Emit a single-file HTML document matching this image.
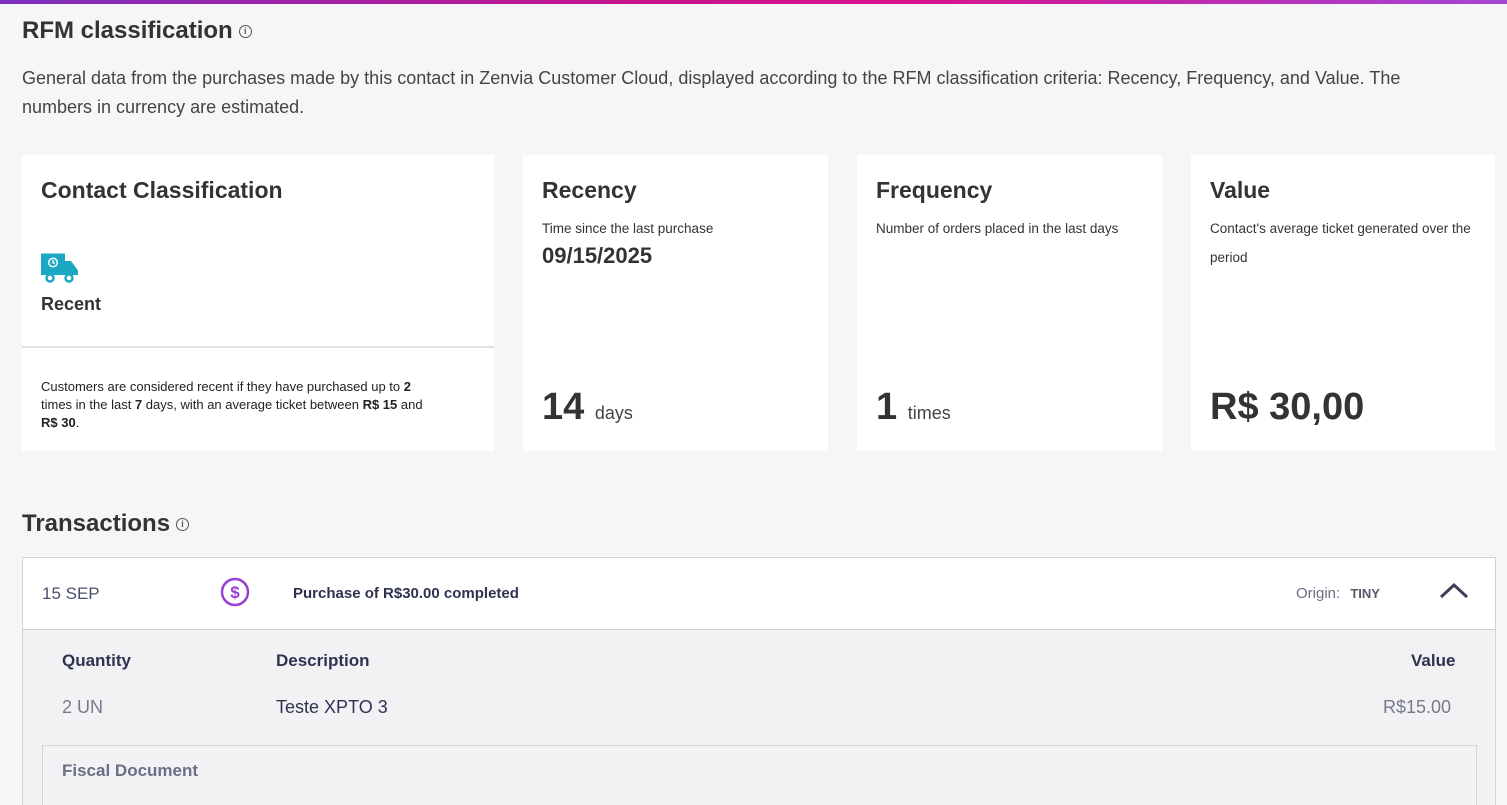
<!DOCTYPE html>
<html style="overflow:hidden;height:805px"><head><style>
*{box-sizing:border-box;margin:0;padding:0}
body{width:1507px;height:805px;overflow:hidden;background:#f6f6f8;font-family:"Liberation Sans",sans-serif;color:#333;position:relative}
.bar{position:absolute;top:0;left:0;width:1507px;height:4px;background:linear-gradient(90deg,#7b2fbe,#c3158f 40%,#d8128a 60%,#a445d6)}
.abs{position:absolute}
h1{position:absolute;left:22px;top:17px;font-size:24px;font-weight:bold;color:#333}
.info{display:inline-block;width:13px;height:13px;border:1.3px solid #555;border-radius:50%;font-size:9px;text-align:center;line-height:11px;vertical-align:middle;margin-left:6px;font-weight:bold;color:#555}
.desc{position:absolute;left:22px;top:64px;width:1445px;font-size:18px;line-height:29px;color:#444}
.card{position:absolute;top:155px;height:296px;background:#fff}
.card h2{position:absolute;left:19px;top:22px;font-size:23px;font-weight:bold;color:#333}
.card .sub{position:absolute;left:19px;top:59px;font-size:13.5px;color:#333;line-height:29px;width:270px}
.big{position:absolute;left:19px;bottom:22px;font-size:38px;font-weight:bold;color:#333}
.big small{font-size:18px;font-weight:normal;color:#444}
</style></head><body>
<div class="bar"></div>
<h1>RFM classification<span class="info">i</span></h1>
<div class="desc">General data from the purchases made by this contact in Zenvia Customer Cloud, displayed according to the RFM classification criteria: Recency, Frequency, and Value. The numbers in currency are estimated.</div>

<div class="card" style="left:22px;width:472px">
<h2>Contact Classification</h2>
<svg class="abs" style="left:19px;top:98px" width="38" height="32" viewBox="0 0 38 32">
<rect x="1.5" y="2" width="21" height="17" fill="none" stroke="#1aa8c4" stroke-width="3"/>
<rect x="3" y="3.5" width="18" height="14" fill="#1aa8c4"/>
<circle cx="12" cy="9.5" r="5" fill="#fff"/><circle cx="12" cy="9.5" r="3.5" fill="#1aa8c4"/>
<path d="M12 7v3h2" stroke="#fff" stroke-width="1.3" fill="none"/>
<path d="M22 8h8l6 8v6H22z" fill="#1aa8c4"/><rect x="0" y="17" width="37" height="5" fill="#1aa8c4"/>
<circle cx="9" cy="25" r="3.5" fill="#fff" stroke="#1aa8c4" stroke-width="2.5"/>
<circle cx="28" cy="25" r="3.5" fill="#fff" stroke="#1aa8c4" stroke-width="2.5"/>
</svg>
<div class="abs" style="left:19px;top:139px;font-size:18px;font-weight:bold;color:#333">Recent</div>
<div class="abs" style="left:0;top:191px;width:472px;height:2px;background:#e2e2e4"></div>
<div class="abs" style="left:19px;top:223px;width:400px;font-size:13px;line-height:18px;color:#222">Customers are considered recent if they have purchased up to <b>2</b> times in the last <b>7</b> days, with an average ticket between <b>R$ 15</b> and <b>R$ 30</b>.</div>
</div>

<div class="card" style="left:523px;width:305px">
<h2>Recency</h2><div class="sub">Time since the last purchase</div>
<div class="abs" style="left:19px;top:88px;font-size:22px;font-weight:bold;color:#333">09/15/2025</div>
<div class="big">14 <small>days</small></div>
</div>
<div class="card" style="left:857px;width:305px">
<h2>Frequency</h2><div class="sub">Number of orders placed in the last days</div>
<div class="big">1 <small>times</small></div>
</div>
<div class="card" style="left:1191px;width:304px">
<h2>Value</h2><div class="sub">Contact's average ticket generated over the period</div>
<div class="big">R$ 30,00</div>
</div>

<h1 style="top:510px">Transactions<span class="info">i</span></h1>
<div class="abs" style="left:22px;top:557px;width:1474px;height:248px;background:#f2f2f5;border:1px solid #d4d4d8;border-bottom:none;overflow:hidden">
<div class="abs" style="left:0;top:0;width:1472px;height:72px;background:#fff;border-bottom:1px solid #ccc"></div>
<div class="abs" style="left:19px;top:26px;font-size:17px;color:#4a4f6a">15 SEP</div>
<svg class="abs" style="left:197px;top:19px" width="30" height="30" viewBox="0 0 30 30"><circle cx="15" cy="15" r="13" fill="none" stroke="#9b3fd8" stroke-width="2.5"/><text x="15" y="21" text-anchor="middle" font-family="Liberation Sans" font-weight="bold" font-size="17" fill="#9b3fd8">$</text></svg>
<div class="abs" style="left:270px;top:27px;font-size:15px;font-weight:bold;color:#2e3350">Purchase of R$30.00 completed</div>
<div class="abs" style="left:1273px;top:27px;font-size:15px;color:#6b6f80">Origin: <span style="font-size:13px;font-weight:bold;color:#555a6a;margin-left:6px">TINY</span></div>
<svg class="abs" style="left:1416px;top:24px" width="30" height="18" viewBox="0 0 30 18"><path d="M2 15L15 3 28 15" fill="none" stroke="#3c4057" stroke-width="3"/></svg>
<div class="abs" style="left:39px;top:93px;font-size:17px;font-weight:bold;color:#2e3350">Quantity</div>
<div class="abs" style="left:253px;top:93px;font-size:17px;font-weight:bold;color:#2e3350">Description</div>
<div class="abs" style="left:1388px;top:93px;font-size:17px;font-weight:bold;color:#2e3350">Value</div>
<div class="abs" style="left:39px;top:139px;font-size:18px;color:#757a8c">2 UN</div>
<div class="abs" style="left:253px;top:139px;font-size:18px;color:#2e3350">Teste XPTO 3</div>
<div class="abs" style="left:1360px;top:139px;font-size:18px;color:#757a8c">R$15.00</div>
<div class="abs" style="left:19px;top:187px;width:1435px;height:100px;border:1px solid #d4d4d8;background:#f2f2f5"></div>
<div class="abs" style="left:39px;top:203px;font-size:17px;font-weight:bold;color:#6b6f85">Fiscal Document</div>
</div>
</body></html>
